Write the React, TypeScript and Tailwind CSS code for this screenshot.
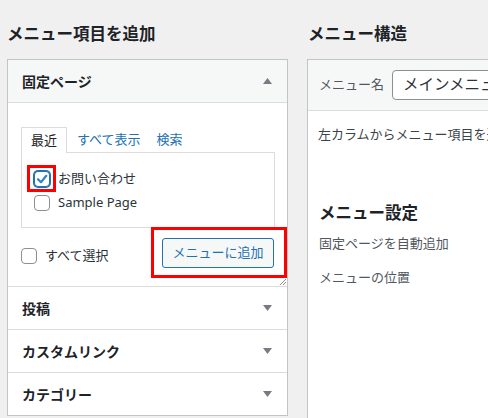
import React from "react";

const FONT = {
  fontFamily: '"Noto Sans", "Noto Sans CJK JP", sans-serif',
};

function Checkbox({ checked }: { checked?: boolean }) {
  return (
    <span
      className={`flex h-[16px] w-[16px] shrink-0 items-center justify-center rounded-[4px] border bg-white ${
        checked ? "border-[#2271b1] shadow-[0_0_0_1px_#2271b1]" : "border-[#8c8f94]"
      }`}
    >
      {checked && (
        <svg width="14" height="14" viewBox="0 0 14 14">
          <path d="M3 7.2 L6 10.2 L11.3 3.8" fill="none" stroke="#3582c4" strokeWidth="2.2" strokeLinecap="round" strokeLinejoin="round" />
        </svg>
      )}
    </span>
  );
}

function Arrow({ up }: { up?: boolean }) {
  return (
    <svg width="9" height="6" viewBox="0 0 9 6">
      {up ? <polygon points="0,6 4.5,0 9,6" fill="#787c82" /> : <polygon points="0,0 9,0 4.5,6" fill="#787c82" />}
    </svg>
  );
}

function Section({ title }: { title: string }) {
  return (
    <div className="flex h-[43px] items-center justify-between border-t border-[#dcdcde] bg-white pl-[14px] pr-[15px]">
      <span className="text-[14px] font-bold text-[#1d2327]">{title}</span>
      <Arrow />
    </div>
  );
}

export default function App() {
  return (
    <div className="flex h-[418px] w-[488px] overflow-hidden bg-[#f0f0f1]" style={FONT}>
      {/* left column */}
      <div className="ml-[7px] w-[281px] shrink-0">
        <h2 className="h-[59px] pt-[22px] text-[16.5px] font-bold leading-[24px] text-[#1d2327]">
          メニュー項目を追加
        </h2>
        <div className="border border-[#c3c4c7] bg-white">
          <div className="flex h-[43px] items-center justify-between border-b border-[#dcdcde] bg-[#f6f7f7] pl-[14px] pr-[15px]">
            <span className="text-[14px] font-bold text-[#1d2327]">固定ページ</span>
            <Arrow up />
          </div>
          <div className="relative pb-[18px] pl-[13px] pr-[12px] pt-[24px]">
            <div className="flex h-[25px] items-stretch text-[13px]">
              <span className="relative z-10 -mb-px flex items-center border-x border-t border-[#dcdcde] bg-white px-[9px] text-[#1d2327]">
                最近
              </span>
              <span className="ml-[10px] flex items-center text-[#2271b1]">すべて表示</span>
              <span className="ml-[16px] flex items-center text-[#2271b1]">検索</span>
            </div>
            <div className="border border-[#dcdcde] pb-[12px] pl-[12px] pt-[14px] text-[13px] text-[#2c3338]">
              <div className="flex h-[24px] items-center gap-[8px]">
                <span className="relative">
                  <Checkbox checked />
                  <span className="absolute -left-[7px] -top-[6px] h-[27px] w-[29px] border-[3px] border-[#ff0000]" />
                </span>
                <span>お問い合わせ</span>
              </div>
              <div className="flex h-[24px] items-center gap-[8px]">
                <Checkbox />
                <span>Sample Page</span>
              </div>
            </div>
            <div className="mt-[10px] flex items-center justify-between">
              <div className="mt-[5px] flex items-center gap-[8px] text-[13px] text-[#2c3338]">
                <Checkbox />
                <span>すべて選択</span>
              </div>
              <div className="relative mr-px">
                <button className="h-[30px] w-[112px] rounded-[3px] border border-[#2271b1] bg-[#f6f7f7] text-[13px] text-[#2271b1]">
                  メニューに追加
                </button>
                <span className="absolute -bottom-[10px] -left-[11px] -right-[13px] -top-[11px] border-[3px] border-[#ff0000]" />
              </div>
            </div>
            <svg className="absolute bottom-[1px] right-[1px]" width="7" height="7" viewBox="0 0 7 7">
              <line x1="1" y1="7" x2="7" y2="1" stroke="#8c8f94" strokeWidth="1" />
              <line x1="4" y1="7" x2="7" y2="4" stroke="#8c8f94" strokeWidth="1" />
            </svg>
          </div>
          <Section title="投稿" />
          <Section title="カスタムリンク" />
          <Section title="カテゴリー" />
        </div>
      </div>

      {/* right column */}
      <div className="ml-[19px] w-[420px] shrink-0">
        <h2 className="h-[59px] pl-px pt-[22px] text-[16.5px] font-bold leading-[24px] text-[#1d2327]">
          メニュー構造
        </h2>
        <div className="h-[400px] border-l border-t border-[#c3c4c7] bg-white">
          <div className="flex h-[51px] items-center border-b border-[#dcdcde] bg-[#f6f7f7] pl-[11px]">
            <span className="text-[13px] text-[#50575e]">メニュー名</span>
            <div className="ml-[8px] flex h-[30px] w-[220px] items-center rounded-[4px] border border-[#8c8f94] bg-white px-[10px] text-[15.5px] text-[#2c3338]">
              メインメニュー
            </div>
          </div>
          <div className="pl-[10px] pt-[13px]">
            <p className="whitespace-nowrap text-[13px] leading-[20px] text-[#3c434a]">
              左カラムからメニュー項目を追加してください。
            </p>
            <h3 className="mt-[57px] pl-px text-[16.5px] font-bold leading-[24px] text-[#1d2327]">メニュー設定</h3>
            <p className="mt-[8px] pl-px text-[13px] leading-[20px] text-[#50575e]">固定ページを自動追加</p>
            <p className="mt-[14px] pl-px text-[13px] leading-[20px] text-[#50575e]">メニューの位置</p>
          </div>
        </div>
      </div>
    </div>
  );
}
